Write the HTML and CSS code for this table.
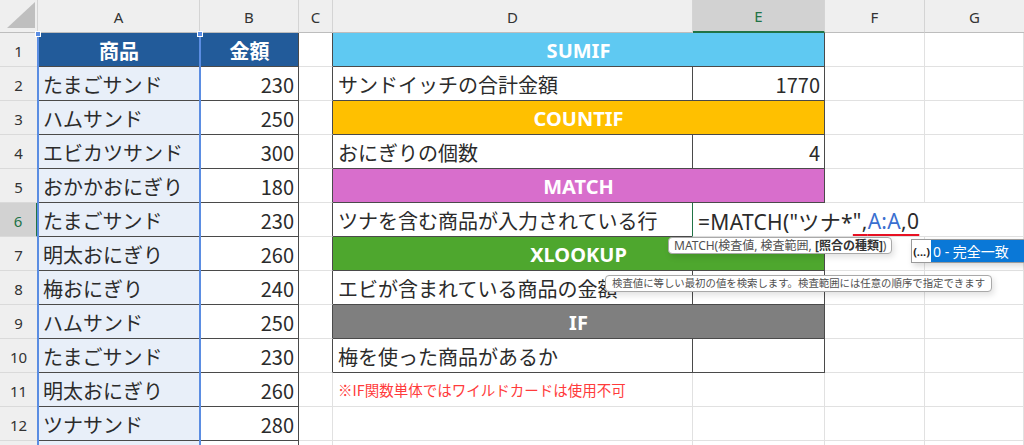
FILE: index.html
```html
<!DOCTYPE html>
<html lang="ja">
<head>
<meta charset="utf-8">
<title>Excel MATCH wildcard</title>
<link rel="stylesheet" href="styles.css">
</head>
<body>
<div class="wrap">
  <div class="sheet">
    <div class="corner"><svg width="37" height="31" viewBox="0 0 37 31"><polygon points="7,28 35,28 35,2" fill="#bfbfbf"/></svg></div>
    <div class="ch">A</div><div class="ch">B</div><div class="ch">C</div><div class="ch">D</div><div class="ch sel">E</div><div class="ch">F</div><div class="ch last">G</div>

    <div class="rh">1</div>
    <div class="c hd">商品</div><div class="c hd">金額</div><div class="c cl"></div>
    <div class="c band sumif">SUMIF</div><div class="c"></div><div class="c"></div>

    <div class="rh">2</div>
    <div class="c a">たまごサンド</div><div class="c b">230</div><div class="c cl"></div>
    <div class="c t">サンドイッチの合計金額</div><div class="c t num">1770</div><div class="c"></div><div class="c"></div>

    <div class="rh">3</div>
    <div class="c a">ハムサンド</div><div class="c b">250</div><div class="c cl"></div>
    <div class="c band countif">COUNTIF</div><div class="c"></div><div class="c"></div>

    <div class="rh">4</div>
    <div class="c a">エビカツサンド</div><div class="c b">300</div><div class="c cl"></div>
    <div class="c t">おにぎりの個数</div><div class="c t num">4</div><div class="c"></div><div class="c"></div>

    <div class="rh">5</div>
    <div class="c a">おかかおにぎり</div><div class="c b">180</div><div class="c cl"></div>
    <div class="c band match">MATCH</div><div class="c"></div><div class="c"></div>

    <div class="rh active">6</div>
    <div class="c a">たまごサンド</div><div class="c b">230</div><div class="c cl"></div>
    <div class="c t">ツナを含む商品が入力されている行</div>
    <div class="c edit">=MATCH("ツナ*<span class="err">",<span class="ref">A:A</span>,0</span></div><div class="c"></div>

    <div class="rh">7</div>
    <div class="c a">明太おにぎり</div><div class="c b">260</div><div class="c cl"></div>
    <div class="c band xlookup">XLOOKUP</div><div class="c"></div><div class="c"></div>

    <div class="rh">8</div>
    <div class="c a">梅おにぎり</div><div class="c b">240</div><div class="c cl"></div>
    <div class="c t">エビが含まれている商品の金額</div><div class="c t num"></div><div class="c"></div><div class="c"></div>

    <div class="rh">9</div>
    <div class="c a">ハムサンド</div><div class="c b">250</div><div class="c cl"></div>
    <div class="c band iff">IF</div><div class="c"></div><div class="c"></div>

    <div class="rh">10</div>
    <div class="c a">たまごサンド</div><div class="c b">230</div><div class="c cl"></div>
    <div class="c t">梅を使った商品があるか</div><div class="c t num"></div><div class="c"></div><div class="c"></div>

    <div class="rh">11</div>
    <div class="c a">明太おにぎり</div><div class="c b">260</div><div class="c"></div>
    <div class="c note">※IF関数単体ではワイルドカードは使用不可</div><div class="c"></div><div class="c"></div><div class="c"></div>

    <div class="rh">12</div>
    <div class="c a">ツナサンド</div><div class="c b">280</div><div class="c"></div>
    <div class="c"></div><div class="c"></div><div class="c"></div><div class="c"></div>

    <div class="rh"></div>
    <div class="c a"></div><div class="c b"></div><div class="c"></div>
    <div class="c"></div><div class="c"></div><div class="c"></div><div class="c"></div>
  </div>

  <div class="range-sel"><span class="hdl hl"></span><span class="hdl hr"></span></div>

  <div class="tip tip-syntax">MATCH(検査値, 検査範囲, <b>[照合の種類]</b>)</div>
  <div class="auto"><span class="more">(...)</span><span class="opt">0 - 完全一致</span></div>
  <div class="tip tip-desc">検査値に等しい最初の値を検索します。検査範囲には任意の順序で指定できます</div>
</div>
</body>
</html>
```

FILE: styles.css
```css
html, body {
  margin: 0;
  padding: 0;
  background: #ffffff;
}
body {
  width: 1024px;
  height: 445px;
  overflow: hidden;
  font-family: "Noto Sans CJK JP", "Noto Sans", sans-serif;
  color: #2b2b2b;
}
.wrap {
  position: relative;
  width: 1024px;
  height: 445px;
  overflow: hidden;
}
.sheet {
  display: grid;
  grid-template-columns: 38px 162px 99px 34px 360px 132px 100px 99px;
  grid-template-rows: 33px repeat(13, 34px);
}
.corner, .ch, .rh {
  background: #efefef;
  box-sizing: border-box;
  font-family: "Noto Sans", "Noto Sans CJK JP", sans-serif;
  font-size: 15px;
  color: #333;
  display: flex;
  align-items: center;
  justify-content: center;
}
.corner {
  border-right: 1px solid #d4d4d4;
  border-bottom: 1px solid #bdbdbd;
  align-items: flex-start;
  justify-content: flex-start;
}
.corner svg { display: block; }
.ch {
  border-right: 1px solid #d4d4d4;
  border-bottom: 1px solid #bdbdbd;
  padding-top: 1px;
}
.ch.last { border-right: none; }
.ch.sel {
  background: #d2d2d2;
  color: #217346;
  border-bottom: 2px solid #217346;
}
.rh {
  border-right: 1px solid #bdbdbd;
  border-bottom: 1px solid #dadada;
  padding-top: 2px;
}
.rh.active {
  background: #d2d2d2;
  color: #217346;
  border-right: 2px solid #217346;
}
.c {
  box-sizing: border-box;
  border-right: 1px solid #e1e1e1;
  border-bottom: 1px solid #e1e1e1;
  font-size: 20px;
  display: flex;
  align-items: center;
  padding: 2px 4px 0 5px;
  white-space: nowrap;
  min-width: 0;
}
.hd {
  background: #225b9a;
  color: #ffffff;
  font-weight: bold;
  justify-content: center;
  border-right: 1px solid #4a4a4a;
  border-bottom: 1px solid #4a4a4a;
}
.a {
  background: #e8eff9;
  border-right: 1px solid #4a4a4a;
  border-bottom: 1px solid #4a4a4a;
}
.b {
  background: #ffffff;
  justify-content: flex-end;
  border-right: 1px solid #4a4a4a;
  border-bottom: 1px solid #4a4a4a;
}
.cl { border-right: 1px solid #4a4a4a; }
.band {
  grid-column: span 2;
  justify-content: center;
  color: #ffffff;
  font-weight: bold;
  font-family: "Noto Sans", "Noto Sans CJK JP", sans-serif;
  border-right: 1px solid #4a4a4a;
  border-bottom: 1px solid #4a4a4a;
  padding-left: 0;
  padding-right: 0;
}
.sumif { background: #5fc9f2; }
.countif { background: #ffc000; }
.match { background: #d86ecc; }
.xlookup { background: #4ea72e; }
.iff { background: #7f7f7f; }
.t {
  border-right: 1px solid #4a4a4a;
  border-bottom: 1px solid #4a4a4a;
}
.num { justify-content: flex-end; }
.edit {
  grid-column: span 2;
  border-left: 1px solid #217346;
  margin-left: -1px;
  border-right: none;
  font-size: 21px;
  padding-left: 5px;
  letter-spacing: 0.3px;
  color: #2b2b2b;
  font-family: "Noto Sans", "Noto Sans CJK JP", sans-serif;
}
.edit .err {
  text-decoration: underline;
  text-decoration-color: #e81123;
  text-decoration-thickness: 2px;
  text-underline-offset: 5px;
}
.edit .ref { color: #3a6fd0; }
.note {
  color: #ff3b3b;
  font-size: 14.5px;
  padding-top: 0;
}
.range-sel {
  position: absolute;
  left: 37px;
  top: 32px;
  width: 164px;
  height: 420px;
  box-sizing: border-box;
  border-left: 2px solid #5b8de2;
  border-right: 2px solid #5b8de2;
  pointer-events: none;
}
.hdl {
  position: absolute;
  top: -1px;
  width: 4px;
  height: 4px;
  background: #5b8de2;
  border: 1px solid #ffffff;
}
.hl { left: -4px; }
.hr { right: -4px; }
.tip {
  position: absolute;
  background: #ffffff;
  border: 1px solid #a9a9a9;
  border-radius: 4px;
  font-family: "Noto Sans", "Noto Sans CJK JP", sans-serif;
  font-size: 12px;
  color: #505050;
  line-height: 15px;
  padding: 0 5px;
  white-space: nowrap;
  box-shadow: 2px 3px 6px rgba(0, 0, 0, 0.12);
}
.tip b { color: #333; }
.tip-syntax {
  left: 668px;
  top: 237px;
}
.tip-desc {
  left: 605px;
  top: 275px;
  font-size: 10.4px;
  padding: 0 6px;
}
.auto {
  position: absolute;
  left: 911px;
  top: 239px;
  height: 22px;
  display: flex;
  border: 1px solid #9a9a9a;
  background: #ffffff;
  box-shadow: 2px 3px 6px rgba(0, 0, 0, 0.15);
  font-family: "Noto Sans", "Noto Sans CJK JP", sans-serif;
  font-size: 14px;
}
.more {
  width: 19px;
  font-size: 11px;
  font-weight: bold;
  color: #222;
  display: flex;
  align-items: center;
  justify-content: center;
}
.opt {
  background: #0a78d7;
  color: #ffffff;
  padding: 0 20px 0 2px;
  width: 110px;
  display: flex;
  align-items: center;
}
```
